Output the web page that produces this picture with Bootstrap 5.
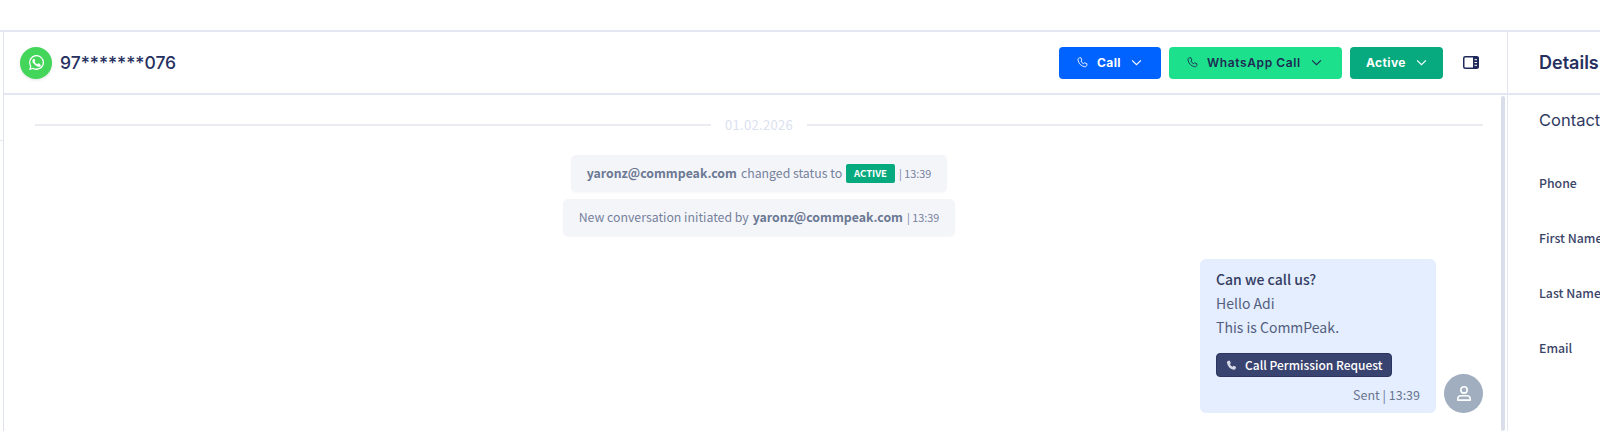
<!DOCTYPE html>
<html lang="en">
<head>
<meta charset="utf-8">
<title>Conversation</title>
<link href="https://cdn.jsdelivr.net/npm/bootstrap@5.3.0/dist/css/bootstrap.min.css" rel="stylesheet">
<style>
html,body{height:431px;overflow:hidden;background:#fff;}
body{font-family:"Noto Sans CJK SC","Noto Sans",sans-serif;color:#26305f;}
.app-shell{margin-top:30px;height:401px;border-top:2px solid #e4e7f1;}
.side-sliver{width:4px;border-right:1px solid #dfe3ee;}
.side-sliver-rule{margin-top:108px;border-top:1px solid #e4e7f1;}
.chat-col{width:1503px;}
.details-col{width:93px;border-left:1px solid #e4e7f1;overflow:hidden;white-space:nowrap;}
.bar{height:63px;border-bottom:2px solid #e4e7f1;}
.chat-bar{padding:0 28px 0 16px;}
.wa-dot{width:32px;height:32px;border-radius:50%;background:#44d65a;box-shadow:0 1px 3px rgba(0,0,0,.12);}
.phone-no{font-family:Inter,sans-serif;font-size:17.5px;font-weight:500;color:#26305f;padding-top:1px;}
.act-btn{height:32px;font-family:Inter,sans-serif;font-size:12px;font-weight:700;border-radius:4px;border:0;padding:0 18px;letter-spacing:.4px;white-space:nowrap;}
.act-call,.act-call:hover{background:#0062ff;color:#fff;width:102px;}
.act-wa,.act-wa:hover{background:#1de08d;color:#1d2b53;letter-spacing:.6px;font-weight:600;width:173px;}
.act-active,.act-active:hover{background:#07a97e;color:#fff;width:93px;padding:0 16px;}
.panel-toggle{width:16px;height:13px;margin-left:12px;color:#1f2a5a;}
.btn-glyph{margin-right:9px;flex-shrink:0;}
.btn-caret{margin-left:10px;flex-shrink:0;}
.chat-body{height:336px;padding-right:2px;}
.scroll-track{width:4px;background:#d9deea;border-radius:2px;margin-top:1px;}
.chat-scroll{padding:20px 18px 0 31px;}
.date-row{font-size:13px;line-height:20px;color:#dbe1ef;letter-spacing:.3px;gap:14px;}
.date-row::before,.date-row::after{content:"";flex:1;border-top:2px solid #eaecf1;}
.sys-stack{margin-top:20px;gap:7px;}
.sys-msg{background:#f4f5f9;border-radius:5px;color:#75819c;font-size:12.3px;line-height:18px;height:37px;padding:0 16px 1px;gap:4px;box-shadow:0 1px 2px rgba(40,50,90,.04);}
.sys-msg b{font-weight:700;color:#6b7893;}
.sys-time{font-size:10.8px;}
.status-tag{background:#07a97e;color:#fff;font-size:9.5px;font-weight:700;border-radius:2px;padding:0 8px;line-height:19px;height:19px;margin-top:1px;}
.bubble-row{margin-top:23px;gap:8px;}
.bubble{width:236px;background:#e4eefe;border-radius:6px;padding:8px 16px 9px;font-size:14px;line-height:24px;color:#535e7e;}
.bubble-title{font-weight:500;font-size:14px;color:#333c62;}
.req-btn{background:#394370;border:1px solid #2c3560;border-radius:4px;color:#fff;font-size:12px;line-height:22px;height:24px;padding:0 8px 0 9px;margin-top:14px;font-weight:500;gap:8px;white-space:nowrap;}
.bubble-meta{font-size:12.5px;line-height:18px;margin-top:9px;color:#6a7590;}
.avatar-dot{width:39px;height:39px;border-radius:50%;background:#a0aec0;}
.details-title{font-family:Inter,sans-serif;font-size:18px;font-weight:600;color:#26305f;padding-left:31px;}
.contact-head{font-family:Inter,sans-serif;font-size:16.5px;color:#2f3a62;padding:15px 0 0 31px;line-height:20px;}
.field-list{padding-top:44px;}
.field-label{font-size:12.3px;font-weight:500;color:#3a4468;padding-left:31px;height:55px;line-height:18px;}
</style>
</head>
<body>
<div class="app-shell d-flex">
  <div class="side-sliver flex-shrink-0"><div class="side-sliver-rule"></div></div>
  <div class="chat-col flex-shrink-0 d-flex flex-column">
    <div class="bar chat-bar d-flex align-items-center">
      <span class="wa-dot d-flex align-items-center justify-content-center flex-shrink-0">
        <svg width="15" height="15" viewBox="0 0 16 16" fill="#fff"><path d="M13.6 2.3A7.9 7.9 0 0 0 1.2 11.9L.1 16l4.2-1.1A7.9 7.9 0 0 0 16 8a7.9 7.9 0 0 0-2.4-5.7zM8 14.5a6.6 6.6 0 0 1-3.4-.9l-.2-.1-2.5.6.7-2.4-.2-.3A6.6 6.6 0 1 1 8 14.5zm3.6-4.9c-.2-.1-1.2-.6-1.4-.7-.2-.1-.3-.1-.5.1l-.6.8c-.1.1-.2.1-.4 0a5.4 5.4 0 0 1-2.7-2.3c-.2-.3.2-.3.6-1 .1-.1 0-.3 0-.4l-.7-1.6c-.2-.4-.3-.4-.5-.4h-.4c-.2 0-.4.1-.6.3-.2.2-.8.8-.8 1.9s.8 2.2.9 2.3c.1.2 1.6 2.4 3.9 3.4 1.4.6 2 .7 2.7.6.4-.1 1.2-.5 1.4-1 .2-.5.2-.9.1-1-.1-.2-.2-.2-.4-.3z"/></svg>
      </span>
      <span class="phone-no ms-2">97*******076</span>
      <div class="ms-auto d-flex align-items-center gap-2">
        <button class="btn act-btn act-call d-flex align-items-center" type="button">
          <svg class="btn-glyph" width="11" height="11" viewBox="0 0 16 16" fill="none" stroke="currentColor" stroke-width="1.3"><path d="M3.7 1.2 5.6 1l1.5 3.6-1.4 1.2c.7 1.8 2.2 3.3 4 4l1.2-1.4 3.6 1.5-.2 1.9c-.2 1.5-1.4 2.7-2.9 2.4C6 13.3 2.4 9.6 1.4 4.1 1.1 2.6 2.2 1.4 3.7 1.2z"/></svg>Call
          <svg class="btn-caret" width="11" height="7" viewBox="0 0 12 8" fill="none" stroke="currentColor" stroke-width="1.3"><path d="m1 1.5 5 5 5-5"/></svg>
        </button>
        <button class="btn act-btn act-wa d-flex align-items-center" type="button">
          <svg class="btn-glyph" width="11" height="11" viewBox="0 0 16 16" fill="none" stroke="currentColor" stroke-width="1.3"><path d="M3.7 1.2 5.6 1l1.5 3.6-1.4 1.2c.7 1.8 2.2 3.3 4 4l1.2-1.4 3.6 1.5-.2 1.9c-.2 1.5-1.4 2.7-2.9 2.4C6 13.3 2.4 9.6 1.4 4.1 1.1 2.6 2.2 1.4 3.7 1.2z"/></svg>WhatsApp Call
          <svg class="btn-caret" width="11" height="7" viewBox="0 0 12 8" fill="none" stroke="currentColor" stroke-width="1.3"><path d="m1 1.5 5 5 5-5"/></svg>
        </button>
        <button class="btn act-btn act-active d-flex align-items-center" type="button">Active
          <svg class="btn-caret" width="11" height="7" viewBox="0 0 12 8" fill="none" stroke="currentColor" stroke-width="1.3"><path d="m1 1.5 5 5 5-5"/></svg>
        </button>
        <svg class="panel-toggle flex-shrink-0" viewBox="0 0 16 13" fill="none"><rect x=".75" y=".75" width="14.5" height="11.5" rx="1.5" stroke="currentColor" stroke-width="1.5"/><path d="M10 1h5.5v11H10z" fill="currentColor"/><path d="M11.5 3.7h2.5M11.5 6.5h2.5M11.5 9.3h2.5" stroke="#fff"/></svg>
      </div>
    </div>
    <div class="chat-body d-flex">
      <div class="chat-scroll flex-grow-1">
        <div class="date-row d-flex align-items-center">01.02.2026</div>
        <div class="sys-stack d-flex flex-column align-items-center">
          <div class="sys-msg d-flex align-items-center"><b>yaronz@commpeak.com</b><span>changed status to</span><span class="status-tag">ACTIVE</span><span class="sys-time">| 13:39</span></div>
          <div class="sys-msg d-flex align-items-center"><span>New conversation initiated by</span><b>yaronz@commpeak.com</b><span class="sys-time">| 13:39</span></div>
        </div>
        <div class="bubble-row d-flex justify-content-end align-items-end">
          <div class="bubble">
            <div class="bubble-title">Can we call us?</div>
            <div>Hello Adi</div>
            <div>This is CommPeak.</div>
            <div class="req-btn d-inline-flex align-items-center">
              <svg width="11" height="11" viewBox="0 0 16 16" fill="#d5d9e6"><path d="M3.7 1.2 5.6 1l1.5 3.6-1.4 1.2c.7 1.8 2.2 3.3 4 4l1.2-1.4 3.6 1.5-.2 1.9c-.2 1.5-1.4 2.7-2.9 2.4C6 13.3 2.4 9.6 1.4 4.1 1.1 2.6 2.2 1.4 3.7 1.2z"/></svg>
              <span>Call Permission Request</span>
            </div>
            <div class="bubble-meta text-end">Sent | 13:39</div>
          </div>
          <div class="avatar-dot d-flex align-items-center justify-content-center flex-shrink-0">
            <svg width="16" height="17" viewBox="0 0 18 18" fill="none" stroke="#fff" stroke-width="1.8"><circle cx="9" cy="5" r="3.6"/><path d="M2 16.5v-1.5c0-1.9 1.6-3.5 3.5-3.5h7c1.9 0 3.5 1.6 3.5 3.5v1.5z" stroke-linejoin="round"/></svg>
          </div>
        </div>
      </div>
      <div class="scroll-track flex-shrink-0"></div>
    </div>
  </div>
  <div class="details-col flex-shrink-0">
    <div class="bar d-flex align-items-center details-title">Details</div>
    <div class="contact-head">Contact</div>
    <div class="field-list">
      <div class="field-label">Phone</div>
      <div class="field-label">First Name</div>
      <div class="field-label">Last Name</div>
      <div class="field-label">Email</div>
    </div>
  </div>
</div>
<script src="https://cdn.jsdelivr.net/npm/bootstrap@5.3.0/dist/js/bootstrap.bundle.min.js"></script>
</body>
</html>
